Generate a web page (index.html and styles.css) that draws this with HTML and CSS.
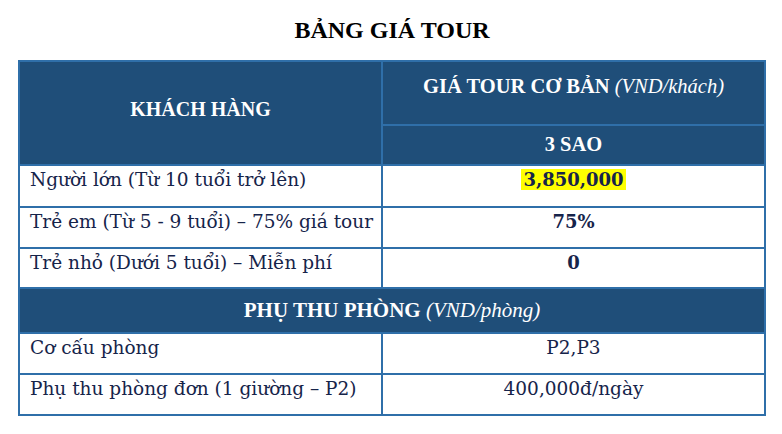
FILE: index.html
```html
<!DOCTYPE html>
<html lang="vi">
<head>
<meta charset="utf-8">
<title>Bảng giá tour</title>
<link rel="stylesheet" href="styles.css">
</head>
<body>
<h1 class="title">BẢNG GIÁ TOUR</h1>
<table class="price">
  <colgroup><col class="c1"><col class="c2"></colgroup>
  <tr class="h1">
    <th rowspan="2" class="head mid">KHÁCH HÀNG</th>
    <th class="head top">GIÁ TOUR CƠ BẢN <i>(VND/khách)</i></th>
  </tr>
  <tr class="h2">
    <th class="head">3 SAO</th>
  </tr>
  <tr class="r r1">
    <td class="label">Người lớn (Từ 10 tuổi trở lên)</td>
    <td class="val"><span class="hl">3,850,000</span></td>
  </tr>
  <tr class="r r2">
    <td class="label">Trẻ em (Từ 5 - 9 tuổi) – 75% giá tour</td>
    <td class="val">75%</td>
  </tr>
  <tr class="r r3">
    <td class="label">Trẻ nhỏ (Dưới 5 tuổi) – Miễn phí</td>
    <td class="val">0</td>
  </tr>
  <tr class="band">
    <th colspan="2" class="head">PHỤ THU PHÒNG <i>(VND/phòng)</i></th>
  </tr>
  <tr class="r r4">
    <td class="label">Cơ cấu phòng</td>
    <td class="plain">P2,P3</td>
  </tr>
  <tr class="r r5">
    <td class="label">Phụ thu phòng đơn (1 giường – P2)</td>
    <td class="plain">400,000đ/ngày</td>
  </tr>
</table>
</body>
</html>
```
FILE: styles.css
```css
html, body {
  margin: 0;
  padding: 0;
  background: #ffffff;
}

.title {
  margin: 0;
  height: 60px;
  line-height: 60px;
  text-align: center;
  font-family: "Liberation Serif", serif;
  font-weight: bold;
  font-size: 24px;
  color: #000000;
  padding-left: 2px;
}

.price {
  margin-left: 18px;
  width: 746px;
  border-collapse: collapse;
  table-layout: fixed;
  border: 2px solid #2f6fa9;
}

.c1 { width: 363px; }
.c2 { width: 383px; }

.price th,
.price td {
  border: 2px solid #2f6fa9;
  padding: 0;
  vertical-align: top;
  white-space: nowrap;
}

.price .head {
  background: #1f4e79;
  color: #ffffff;
  font-family: "Liberation Serif", serif;
  font-weight: bold;
  font-size: 20.5px;
  text-align: center;
  line-height: 24px;
}

.head i {
  font-weight: normal;
}

.price .head.mid {
  vertical-align: middle;
  padding-bottom: 8px;
  font-size: 20px;
}

.h1 { height: 64px; }
.price .h1 .top { padding-top: 12px; }
.h2 { height: 40px; }
.price .h2 .head { padding-top: 6px; }

.band { height: 45px; }
.price .band .head { padding-top: 9px; font-size: 21px; }

.r1 { height: 42px; }
.r2 { height: 41px; }
.r3 { height: 40px; }
.r4 { height: 41px; }
.r5 { height: 41px; }

.price .label,
.price .val,
.price .plain {
  font-family: "DejaVu Serif", serif;
  font-size: 18.5px;
  color: #16244a;
  line-height: 26px;
  padding-top: 1px;
}

.price .label {
  padding-left: 10px;
  text-align: left;
}

.price .val {
  text-align: center;
  font-weight: bold;
  font-size: 18px;
}

.price .plain {
  text-align: center;
}

.hl {
  background: #ffff00;
  padding: 0 2px;
}
```
